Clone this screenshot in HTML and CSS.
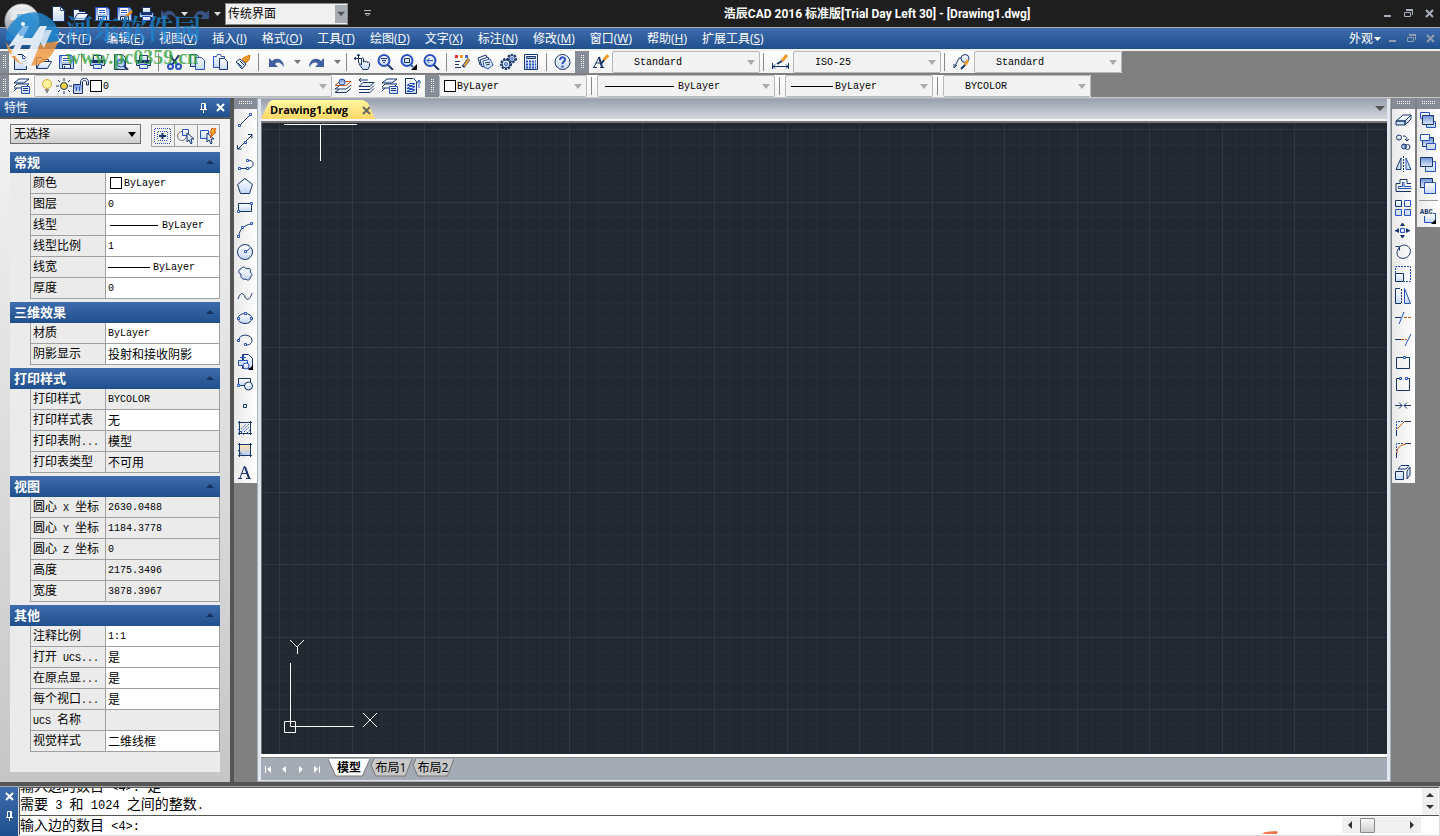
FILE: index.html
```html
<!DOCTYPE html>
<html lang="zh-CN">
<head>
<meta charset="utf-8">
<title>浩辰CAD 2016 标准版</title>
<link rel="stylesheet" href="styles.css">
</head>
<body>
<svg class="sprite" aria-hidden="true">
  <defs>
    <linearGradient id="pale" x1="0" y1="0" x2="0" y2="1"><stop offset="0" stop-color="#fff"/><stop offset="1" stop-color="#c5d8f5"/></linearGradient>
    <linearGradient id="mid" x1="0" y1="0" x2="0" y2="1"><stop offset="0" stop-color="#6f92d4"/><stop offset="1" stop-color="#dfe9fa"/></linearGradient>
    <linearGradient id="sand" x1="0" y1="0" x2="0" y2="1"><stop offset="0" stop-color="#fbe3b4"/><stop offset="1" stop-color="#b9cdf0"/></linearGradient>
    <linearGradient id="knob" x1="0" y1="0" x2="0" y2="1"><stop offset="0" stop-color="#f8f8f8"/><stop offset="1" stop-color="#7b8696"/></linearGradient>
  </defs>
  <symbol id="new" viewBox="0 0 17 16"><path class="n p" d="M2.500 .5h8l4 4v11h-12z"/><path class="b" d="M10.500 .5v4h4"/></symbol>
  <symbol id="open" viewBox="0 0 17 16"><path class="n p" d="M1.500 14.500v-11h5l1 2h6v2"/><path class="n p" d="M1.500 14.500l4-7h11l-4 7z"/></symbol>
  <symbol id="save" viewBox="0 0 17 16"><path class="b m" d="M1.500 1.500h12l2 2v11h-14z"/><path fill="#fff" d="M4 2h8v6H4z"/><path class="b" d="M5 4.500h6M5 6.500h6"/><path class="n p" d="M4.500 10.500h8v4h-8z"/><path class="n" d="M6.500 12v2"/></symbol>
  <symbol id="saveas" viewBox="0 0 17 16"><use href="#save"/><path stroke="#e88a1a" stroke-width="2.500" d="M16 5l-7 7"/><path class="n" d="M9 11l-1 3 3-1"/></symbol>
  <symbol id="print" viewBox="0 0 17 16"><path class="n p" d="M4.500 6V1.500h8V6"/><path class="n m" d="M1.500 6.500h14v5h-14z"/><path fill="#17356b" d="M3 7h11v2H3z"/><path class="b p" d="M4.500 10.500h8v4h-8z"/></symbol>
  <symbol id="preview" viewBox="0 0 17 16"><path class="n p" d="M2.500 .5h8l3 3v12h-11z"/><circle class="b m" cx="9" cy="9" r="4"/><path class="n w" d="M12 12l4 4"/></symbol>
  <symbol id="cut" viewBox="0 0 17 16"><path class="n w" d="M4 1l7 10M13 1L6 11"/><circle class="b w" cx="4.500" cy="12.500" r="2.500"/><circle class="b w" cx="12.500" cy="12.500" r="2.500"/></symbol>
  <symbol id="copy" viewBox="0 0 17 16"><path class="n p" d="M1.500 .5h6l2 2v10h-8z"/><path class="b p" d="M6.500 3.500h6l3 3v9h-9z"/></symbol>
  <symbol id="paste" viewBox="0 0 17 16"><path class="b p" d="M1.500 2.500h3l1-2h3l1 2h3v11h-11z"/><path class="n p" d="M7.500 4.500h5l3 3v8h-8z"/></symbol>
  <symbol id="brush" viewBox="0 0 17 16"><path fill="#f39a25" stroke="#d97a10" d="M10 3l5-2-1 5-3 3-4-4z"/><path class="n p" d="M1 8l4-3 6 5-4 5z"/><path class="n" d="M3 9l4 4M5 7l4 4"/></symbol>
  <symbol id="undo" viewBox="0 0 17 16"><path class="undo" d="M1 4v9h9L7 10c3-3 6-1 9 3 0-7-7-11-12-6z"/></symbol>
  <symbol id="redo" viewBox="0 0 17 16"><path class="undo" d="M16 4v9H7l3-3C7 7 4 9 1 13 1 6 8 2 13 7z"/></symbol>
  <symbol id="caret" viewBox="0 0 9 6"><path fill="currentColor" d="M1 1h7L4.500 5z"/></symbol>
  <symbol id="pan" viewBox="0 0 17 16"><path class="n" d="M0 4.500h9M4.500 0v9M2 3L0 4.500 2 6M3 2l1.500-2L6 2"/><path class="n p" d="M7.500 11V4.500c0-1 2-1 2 0V8c1-1 2-1 2 0 1-1 2-1 2 .5 1-.5 2 0 2 1V12l-1.500 3.500H9L5 10c0-1 1-1 2.500 1z"/></symbol>
  <symbol id="zoomrt" viewBox="0 0 17 16"><circle class="b p w" cx="7" cy="6.500" r="5.500"/><path class="n" d="M4 4.500h6M5 6.500h4M6 8.500h2"/><path class="n w" d="M11 11l5 5"/></symbol>
  <symbol id="zoomwin" viewBox="0 0 17 16"><circle class="b p w" cx="7" cy="6.500" r="5.500"/><path class="n" d="M4.500 4.500h5v4h-5z"/><path class="b w" d="M11 11l2 2"/><path d="M17 10v6h-6z"/></symbol>
  <symbol id="zoomprev" viewBox="0 0 17 16"><circle class="b p w" cx="7" cy="6.500" r="5.500"/><path class="b" d="M4 6.500h6M6.500 4L4 6.500 6.500 9"/><path class="n w" d="M11 11l5 5"/></symbol>
  <symbol id="props" viewBox="0 0 17 16"><path fill="#d33" d="M1 1h3v3H1z"/><path fill="#f39a25" d="M6 1h3v3H6z"/><path fill="#46c" d="M11 1h3v3h-3z"/><path class="n" d="M1 7.500h5M1 10.500h4M1 13.500h6"/><path stroke="#17356b" stroke-width="3" d="M15 5l-6 8"/><path stroke="#f3a335" stroke-width="2" d="M15 5l-5 7"/></symbol>
  <symbol id="sheets" viewBox="0 0 17 16"><path class="n p" d="M1 4l8-3 2 7-8 3z"/><path class="n p" d="M3 6l8-3 2 7-8 3z"/><path class="b p" d="M6 7l7-2 3 6-5 4-4-2z"/><path class="n" d="M8 9l5-1M9 11l4-1"/></symbol>
  <symbol id="gears" viewBox="0 0 17 16"><circle class="n p gear" cx="6" cy="10" r="4.500"/><circle class="n p gear" cx="12" cy="4.500" r="3.500"/><circle class="n p" cx="6" cy="10" r="4"/><circle class="n p" cx="12" cy="4.500" r="3"/><circle class="b" cx="6" cy="10" r="1.500"/><circle class="b" cx="12" cy="4.500" r="1"/></symbol>
  <symbol id="calc" viewBox="0 0 17 16"><path class="n p" d="M1.500 .5h13v15h-13z"/><path class="n m" d="M3.500 2.500h9v2h-9z"/><path stroke="#2852bf" stroke-width="2" stroke-dasharray="2 1" d="M3 7.500h10M3 10.500h10M3 13.500h10"/></symbol>
  <symbol id="help" viewBox="0 0 17 16"><circle class="n p" cx="8.500" cy="8" r="7.500"/><path class="b w" d="M6 6c0-4 6-3 5 0-1 2-2.500 2-2.500 4M8.500 11.500v2"/></symbol>
  <symbol id="tstyle" viewBox="0 0 17 16"><path class="n" d="M2 13L7 3l3 10M4 9h5M1 13.500h4M8 13.500h4"/><path class="n w" d="M7 3l3 10"/><path stroke="#f39a25" stroke-width="3" d="M16 1l-4 5"/><path class="n w" d="M12 6l-3 4"/></symbol>
  <symbol id="dstyle" viewBox="0 0 17 16"><path class="n" d="M.5 9v6M16.500 9v6M1 12.500h15M3 10.500l-2 2 2 2M14 10.500l2 2-2 2"/><path stroke="#f39a25" stroke-width="3" d="M15 1l-5 6"/><path class="n w" d="M10 7l-5 3"/></symbol>
  <symbol id="mstyle" viewBox="0 0 17 16"><circle class="n p" cx="12" cy="4.500" r="4"/><path class="n" d="M8 4H6L2 12M1 10v4l3-3"/><path stroke="#f39a25" stroke-width="3" d="M15 6l-3 5"/><path class="n w" d="M12 11l-4 4"/></symbol>
  <symbol id="layer" viewBox="0 0 17 16"><path class="n p" d="M1 5l5-4h10l-5 4z"/><path class="n" d="M1 9l3-3h12l-4 4H1M1 13l3-3"/><path class="b p" d="M8.500 8.500h8v7h-8z"/><path class="n" d="M10 10.500h5M10 12.500h5"/></symbol>
  <symbol id="layerobj" viewBox="0 0 17 16"><path class="o p" d="M0 7.500l5-4h11l-5 4z"/><path class="n" d="M0 11l4-3M0 11h11l5-4M0 14.500l4-3M0 14.500h11l5-4"/><circle class="b m" cx="7" cy="4" r="3"/></symbol>
  <symbol id="layerprev" viewBox="0 0 17 16"><path class="n p" d="M1 8.500l4-4h11l-4 4z"/><path class="n" d="M1 11.500h11l4-4M1 14.500h11l4-4M1 2h9M3 0L1 2l2 2"/></symbol>
  <symbol id="layerst" viewBox="0 0 17 16"><path class="n p" d="M1.500 .5h8l3 3v12h-11z"/><path class="b" d="M3 7.500l3-2h5l-3 2zM3 10.500l3-2h5l-3 2zM3 13.500l3-2h5l-3 2zM15 10V3M13 5l2-3 2 3"/></symbol>
  <symbol id="bulb" viewBox="0 0 17 16"><circle cx="8" cy="6" r="4.500" fill="#fff29a" stroke="#d0ab35"/><path stroke="#8a8a8a" stroke-width="2" d="M6 12h4M7 14h2"/></symbol>
  <symbol id="sun" viewBox="0 0 17 16"><path class="n" d="M8 0v3M8 13v3M0 8h3M13 8h3M2 2l2 2M12 12l2 2M2 14l2-2M12 4l2-2"/><circle class="n sunny" cx="8" cy="8" r="3.500"/></symbol>
  <symbol id="lock" viewBox="0 0 17 16"><path class="n m" d="M.5 6.500h9v9h-9z"/><path class="n p" d="M7.500 7V4c0-5 8-5 8 0v3h-2V4c0-2-4-2-4 0v3"/><path class="b" d="M3.500 9v4M6.500 9v4"/></symbol>
  <symbol id="line" viewBox="0 0 17 16"><path class="n" d="M2 14L14 2"/><path class="k" d="M1.500 12.500h2v2h-2zM12.500 1.500h2v2h-2z"/></symbol>
  <symbol id="xline" viewBox="0 0 17 16"><path class="n" d="M1 15L15 1M.5 11v4h4M11 .5h4v4"/><path class="k" d="M7.500 7.500h2v2h-2z"/></symbol>
  <symbol id="pline" viewBox="0 0 17 16"><path class="n" d="M3 12.500h7c8 0 8-9 1-8"/><path class="k" d="M1.500 11.500h2v2h-2zM9.500 11.500h2v2h-2zM9.500 3.500h2v2h-2z"/></symbol>
  <symbol id="poly" viewBox="0 0 17 16"><path class="n p" d="M8 .5l7.500 6-3 9h-9l-3-9z"/></symbol>
  <symbol id="rect" viewBox="0 0 17 16"><path class="n p" d="M1.500 3.500h13v8h-13z"/><path class="k" d="M.5 10.500h2v2h-2zM13.500 2.500h2v2h-2z"/></symbol>
  <symbol id="arc" viewBox="0 0 17 16"><path class="n" d="M2 14C2 8 7 3 14 2"/><path class="k" d="M.5 13.500h2v2h-2zM4.500 4.500h2v2h-2zM13.500 .5h2v2h-2z"/></symbol>
  <symbol id="circle" viewBox="0 0 17 16"><circle class="n p" cx="8" cy="8" r="7.500"/><path class="b" d="M9 8l4-4"/><path class="k" d="M7.500 6.500h2v2h-2z"/></symbol>
  <symbol id="cloud" viewBox="0 0 17 16"><path class="n p" d="M4 8C1 8 1 3 4 3c1-3 5-2 5 0 3-2 6 1 4 3 3 2 2 5 0 5 1 3-3 4-4 2-3 1-6-1-5-5z"/></symbol>
  <symbol id="spline" viewBox="0 0 17 16"><path class="n" d="M1 11c3-8 5-6 7-2s5 3 7-4"/></symbol>
  <symbol id="ellipse" viewBox="0 0 17 16"><ellipse class="n p" cx="8" cy="8.500" rx="7" ry="5"/><path class="k" d="M.5 7.500h2v2h-2zM13.500 7.500h2v2h-2zM7.500 2.500h2v2h-2z"/></symbol>
  <symbol id="earc" viewBox="0 0 17 16"><path class="n" d="M2 8c0-7 13-6 13 0 0 4-3 5-6 5"/><path class="k" d="M.5 7.500h2v2h-2zM7.500 11.500h2v2h-2z"/></symbol>
  <symbol id="insert" viewBox="0 0 17 16"><path class="n p" d="M5.500 .5h6l4 4v10h-10z"/><path class="b p" d="M1.500 6.500h9v5h-9zM3 3.500h6M6.500 1v5"/><circle class="b p" cx="9" cy="12" r="3"/><path d="M16 11v5h-5z"/></symbol>
  <symbol id="block" viewBox="0 0 17 16"><path class="n p" d="M1.500 2.500h12v7h-12z"/><circle class="n p" cx="11.500" cy="10" r="4"/><path class="k" d="M.5 8.500h2v2h-2z"/></symbol>
  <symbol id="point" viewBox="0 0 17 16"><path class="n" d="M6.500 6.500h3v3h-3z"/></symbol>
  <symbol id="hatch" viewBox="0 0 17 16"><path class="n p" d="M2.500 1v14M13.500 1v14M1 2.500h14M1 13.500h14"/><path class="b" stroke-dasharray="2 1" d="M4 9l5-5M4 12l8-8M7 12l5-5M10 13l3-3"/><path class="b" d="M1 9l6 6"/></symbol>
  <symbol id="grad" viewBox="0 0 17 16"><path fill="url(#sand)" d="M3 3h10v10H3z"/><path class="n" d="M2.500 1v14M13.500 1v14M1 2.500h14M1 13.500h14"/><path class="n" stroke-dasharray="2 1" d="M1 8l6 7"/></symbol>
  <symbol id="mtext" viewBox="0 0 17 16"><path class="n" d="M3 14L7.500 2 12 14M4 9.500h6M1 14.500h4M9 14.500h5"/><path class="n w" d="M8 3l4 11"/></symbol>
  <symbol id="erase" viewBox="0 0 17 16"><path class="n p" d="M1 9l7-6h8l-6 6zM1 9h9v4H1zM10 9l6-6v4l-6 6z"/></symbol>
  <symbol id="copyobj" viewBox="0 0 17 16"><circle class="n p" cx="4" cy="3.500" r="2.500"/><circle class="n m" cx="9" cy="12.500" r="2.500"/><circle class="n" cx="12.500" cy="13" r="2.500"/><path class="n" d="M8 2c3 0 4 1 4 5M10 5l2 2 2-2"/></symbol>
  <symbol id="mirror" viewBox="0 0 17 16"><path class="n p" d="M1 13.500h5V2z"/><path class="b p" d="M16 13.500h-5V2z"/><path class="n" stroke-dasharray="2 1" d="M8.500 0v16"/></symbol>
  <symbol id="offset" viewBox="0 0 17 16"><path class="n" d="M16 5.500h-4v-4h-7v4h-4v8h15"/><path class="b" d="M16 8.500h-7v-4H7.500v4h-4v2h13"/></symbol>
  <symbol id="array" viewBox="0 0 17 16"><path class="n p" d="M.5 .5h6v6h-6z"/><path class="b p" d="M9.500 .5h6v6h-6zM.5 9.500h6v6h-6zM9.500 9.500h6v6h-6z"/></symbol>
  <symbol id="move" viewBox="0 0 17 16"><path class="b p" d="M5.500 6.500h4v4h-4z"/><path fill="#17356b" d="M7 1h1l2 3H5zM7 16h1l2-3H5zM0 8h1l3-2v5L0 9zM15 8h-1l-3-2v5l4-2z"/></symbol>
  <symbol id="rotate" viewBox="0 0 17 16"><path class="n" d="M5 2.500c6-4 12 1 10 7s-12 7-13 0c0-3 1-4 2-6M.5 2.500h4v4"/></symbol>
  <symbol id="scale" viewBox="0 0 17 16"><path class="b" stroke-dasharray="2 1" d="M.5 7V.5h15v15H9"/><path class="n p" d="M.5 7.500h8v8h-8z"/></symbol>
  <symbol id="stretch" viewBox="0 0 17 16"><path class="n p" d="M5 .5H.5v15H6"/><path class="n" stroke-dasharray="2 1" d="M6.500 1v14"/><path class="b p" d="M9.500 .5l6 15h-6z"/></symbol>
  <symbol id="trim" viewBox="0 0 17 16"><path class="n" d="M0 7.500h6"/><path class="b" d="M4 14l5-12"/><path class="o" stroke-dasharray="3 1" d="M9 7.500h8"/></symbol>
  <symbol id="extend" viewBox="0 0 17 16"><path class="n" d="M0 7.500h6"/><path class="o" stroke-dasharray="3 1" d="M6 7.500h6"/><path class="b" d="M10 14l6-12"/></symbol>
  <symbol id="breakpt" viewBox="0 0 17 16"><path class="n" d="M1.500 3.500h13v11h-13z"/><path class="k" d="M8.500 2.500h2v2h-2z"/></symbol>
  <symbol id="break" viewBox="0 0 17 16"><path class="n" d="M4 2.500H1.500v12h13v-12H12"/><path class="k" d="M4.500 1.500h2v2h-2zM10.500 1.500h2v2h-2z"/></symbol>
  <symbol id="join" viewBox="0 0 17 16"><path class="n" d="M0 7.500h7M4 4.500l3 3-3 3M16 7.500H9M12 4.500l-3 3 3 3"/></symbol>
  <symbol id="chamfer" viewBox="0 0 17 16"><path class="n" d="M10 1.500h6M1.500 16v-6"/><path class="b" stroke-dasharray="2 1" d="M1.500 9V1.500H9"/><path class="o" d="M2 9l8-8"/></symbol>
  <symbol id="fillet" viewBox="0 0 17 16"><path class="n" d="M10 1.500h6M1.500 16v-6"/><path class="b" stroke-dasharray="2 1" d="M1.500 9V1.500H9"/><path class="o" d="M2 11c0-5 3-8 9-9"/></symbol>
  <symbol id="explode" viewBox="0 0 17 16"><path class="n p" d="M.5 7.500h8v8h-8zM3 5l3-3.500h8L11 5zM12 7l3-4v8l-3 4z"/></symbol>
  <symbol id="ord1" viewBox="0 0 17 16"><path class="b p" d="M.5 .5h9v6h-9zM6.500 9.500h9v6h-9z"/><path class="n m" d="M2.500 3.500h11v9h-11z"/></symbol>
  <symbol id="ord2" viewBox="0 0 17 16"><path class="n m" d="M2.500 3.500h11v9h-11z"/><path class="b p" d="M.5 .5h9v6h-9zM6.500 9.500h9v6h-9z"/></symbol>
  <symbol id="ord3" viewBox="0 0 17 16"><path class="b p" d="M5.500 5.500h10v10h-10z"/><path class="n m" d="M.5 1.500h12v9H.5z"/></symbol>
  <symbol id="ord4" viewBox="0 0 17 16"><path class="n m" d="M.5 .5h12v9H.5z"/><path class="b p" d="M4.500 4.500h11v11h-11z"/></symbol>
  <symbol id="ord5" viewBox="0 0 17 16"><path class="b p" d="M4.500 8v6.500h11V5.500H13"/><path d="M16 11v5h-5z"/></symbol>
  <symbol id="grip" viewBox="0 0 17 16"><path class="b" d="M1 .5h15M1 15.500h15M.5 1v14M16.500 1v14M4 3.500h9M4 12.500h9M3.500 4v8M13.500 4v8" stroke-dasharray="1 1"/><path class="n w" d="M5 8h7M8.500 5v6"/></symbol>
  <symbol id="pick" viewBox="0 0 17 16"><circle cx="5" cy="8" r="4.500" class="g"/><path class="b p" d="M5.500 1.500h6v6h-6z"/><path class="n p" d="M10 5v9l2-2 2 4 1-1-1-4h3z"/></symbol>
  <symbol id="quick" viewBox="0 0 17 16"><path class="b p" d="M.5 2.500h8v8h-8z"/><path class="n p" d="M7 5v9l2-2 2 4 1-1-1-4h3z"/><path fill="#ffb22e" stroke="#d9540a" d="M12 0h4l-2 4h2l-6 6 2-5h-2z"/></symbol>
  <symbol id="min" viewBox="0 0 11 11"><path class="c" stroke-width="2" d="M2 8h7"/></symbol>
  <symbol id="restore" viewBox="0 0 11 11"><path class="c" stroke-width="2" d="M3 2h7"/><path class="c" d="M9.500 2v5M1.500 4.500h6v4h-6z"/></symbol>
  <symbol id="close" viewBox="0 0 11 11"><path class="c" stroke-width="2" d="M2 2l7 7M9 2L2 9"/></symbol>
  <symbol id="pin" viewBox="0 0 11 11"><path class="c" stroke-width="1" d="M3.500 7V1.500h4V7M2 7.500h7M5.500 8v3M6.500 2v5"/></symbol>
  <pattern id="grid" x="17" y="6" width="145" height="145" patternUnits="userSpaceOnUse">
    <path class="minor" d="M15.500 0v145M29.500 0v145M44.500 0v145M58.500 0v145M87.500 0v145M102.500 0v145M116.500 0v145M131.500 0v145M0 15.500h145M0 29.500h145M0 44.500h145M0 58.500h145M0 87.500h145M0 102.500h145M0 116.500h145M0 131.500h145"/>
    <path class="major" d="M.5 0v145M73.500 0v145M0 .5h145M0 73.500h145"/>
  </pattern>
</svg>

<header class="titlebar">
  <div class="quick">
    <button aria-label="新建"><svg><use href="#new"/></svg></button>
    <button aria-label="打开"><svg><use href="#open"/></svg></button>
    <button aria-label="保存"><svg><use href="#save"/></svg></button>
    <button aria-label="另存为"><svg><use href="#saveas"/></svg></button>
    <button aria-label="打印"><svg><use href="#print"/></svg></button>
    <button aria-label="放弃" class="dim"><svg><use href="#undo"/></svg></button>
    <button aria-label="放弃列表" class="arrow"><svg><use href="#caret"/></svg></button>
    <button aria-label="重做" class="dim"><svg><use href="#redo"/></svg></button>
    <button aria-label="重做列表" class="arrow"><svg><use href="#caret"/></svg></button>
  </div>
  <div class="workspace"><select aria-label="工作空间"><option>传统界面</option></select><svg><use href="#caret"/></svg></div>
  <button class="more" aria-label="自定义"><svg viewBox="0 0 9 9"><path stroke="#bbb" fill="none" d="M1 1.500h7M2 4.500h5L4.500 7z"/></svg></button>
  <h1>浩辰CAD 2016 标准版[Trial Day Left 30] - [Drawing1.dwg]</h1>
  <div class="winctl">
    <button aria-label="最小化"><svg><use href="#min"/></svg></button>
    <button aria-label="还原"><svg><use href="#restore"/></svg></button>
    <button aria-label="关闭"><svg><use href="#close"/></svg></button>
  </div>
</header>

<nav class="menubar">
  <button>文件(<u>F</u>)</button><button>编辑(<u>E</u>)</button><button>视图(<u>V</u>)</button><button>插入(<u>I</u>)</button><button>格式(<u>O</u>)</button><button>工具(<u>T</u>)</button><button>绘图(<u>D</u>)</button><button>文字(<u>X</u>)</button><button>标注(<u>N</u>)</button><button>修改(<u>M</u>)</button><button>窗口(<u>W</u>)</button><button>帮助(<u>H</u>)</button><button>扩展工具(<u>S</u>)</button>
  <button class="look">外观<svg class="car"><use href="#caret"/></svg></button>
  <div class="winctl sub">
    <button aria-label="最小化文档"><svg><use href="#min"/></svg></button>
    <button aria-label="还原文档"><svg><use href="#restore"/></svg></button>
    <button aria-label="关闭文档"><svg><use href="#close"/></svg></button>
  </div>
</nav>

<div class="bars">
  <div class="bar">
    <i class="handle"></i>
    <button aria-label="新建"><svg><use href="#new"/></svg></button>
    <button aria-label="打开"><svg><use href="#open"/></svg></button>
    <button aria-label="保存"><svg><use href="#save"/></svg></button>
    <i class="sep"></i>
    <button aria-label="打印"><svg><use href="#print"/></svg></button>
    <button aria-label="打印预览"><svg><use href="#preview"/></svg></button>
    <button aria-label="发布"><svg><use href="#print"/></svg></button>
    <i class="sep"></i>
    <button aria-label="剪切"><svg><use href="#cut"/></svg></button>
    <button aria-label="复制"><svg><use href="#copy"/></svg></button>
    <button aria-label="粘贴"><svg><use href="#paste"/></svg></button>
    <button aria-label="特性匹配"><svg><use href="#brush"/></svg></button>
    <i class="sep"></i>
    <button aria-label="放弃" class="wide"><svg><use href="#undo"/></svg></button>
    <button aria-label="放弃列表" class="arrow"><svg><use href="#caret"/></svg></button>
    <button aria-label="重做" class="wide"><svg><use href="#redo"/></svg></button>
    <button aria-label="重做列表" class="arrow"><svg><use href="#caret"/></svg></button>
    <i class="sep"></i>
    <button aria-label="平移"><svg><use href="#pan"/></svg></button>
    <button aria-label="实时缩放"><svg><use href="#zoomrt"/></svg></button>
    <button aria-label="窗口缩放"><svg><use href="#zoomwin"/></svg></button>
    <button aria-label="缩放上一个"><svg><use href="#zoomprev"/></svg></button>
    <i class="sep"></i>
    <button aria-label="特性"><svg><use href="#props"/></svg></button>
    <button aria-label="图纸集"><svg><use href="#sheets"/></svg></button>
    <button aria-label="选项"><svg><use href="#gears"/></svg></button>
    <button aria-label="计算器"><svg><use href="#calc"/></svg></button>
    <i class="sep"></i>
    <button aria-label="帮助"><svg><use href="#help"/></svg></button>
    <i class="handle inner"></i>
    <button aria-label="文字样式"><svg><use href="#tstyle"/></svg></button>
    <div class="combo"><select class="in" aria-label="文字样式"><option>Standard</option></select></div>
    <i class="sep"></i>
    <button aria-label="标注样式" class="mid"><svg><use href="#dstyle"/></svg></button>
    <div class="combo"><select class="in" aria-label="标注样式"><option>ISO-25</option></select></div>
    <i class="sep"></i>
    <button aria-label="引线样式" class="mid"><svg><use href="#mstyle"/></svg></button>
    <div class="combo"><select class="in" aria-label="引线样式"><option>Standard</option></select></div>
  </div>
  <div class="bar">
    <i class="handle"></i>
    <button aria-label="图层" class="mid"><svg><use href="#layer"/></svg></button>
    <div class="combo layers"><svg class="st"><use href="#bulb"/></svg><svg class="st"><use href="#sun"/></svg><svg class="st"><use href="#lock"/></svg><b class="swatch"></b><select aria-label="图层"><option>0</option></select></div>
    <button aria-label="置为当前层"><svg><use href="#layerobj"/></svg></button>
    <button aria-label="上一个图层"><svg><use href="#layerprev"/></svg></button>
    <button aria-label="图层管理"><svg><use href="#layer"/></svg></button>
    <button aria-label="图层状态"><svg><use href="#layerst"/></svg></button>
    <i class="handle inner"></i>
    <div class="combo"><b class="swatch"></b><select aria-label="颜色"><option>ByLayer</option></select></div>
    <i class="sep big"></i>
    <div class="combo ltype"><b class="rule"></b><select aria-label="线型"><option>ByLayer</option></select></div>
    <i class="sep big"></i>
    <div class="combo"><b class="rule short"></b><select aria-label="线宽"><option>ByLayer</option></select></div>
    <i class="sep big"></i>
    <div class="combo"><select class="in" aria-label="打印样式"><option>BYCOLOR</option></select></div>
  </div>
</div>

<main class="work">
  <aside class="props">
    <h2><span>特性</span><button aria-label="固定"><svg><use href="#pin"/></svg></button><button aria-label="关闭特性"><svg><use href="#close"/></svg></button></h2>
    <div class="choose">
      <div class="pickbox"><select aria-label="选择对象"><option>无选择</option></select></div>
      <div class="trio">
        <button aria-label="切换"><svg><use href="#grip"/></svg></button>
        <button aria-label="选择"><svg><use href="#pick"/></svg></button>
        <button aria-label="快速选择"><svg><use href="#quick"/></svg></button>
      </div>
    </div>
    <div class="sheet">
      <section><h3><button>常规</button></h3>
        <table>
          <tr><th>颜色</th><td class="m"><b class="swatch"></b>ByLayer</td></tr>
          <tr><th>图层</th><td class="m">0</td></tr>
          <tr><th>线型</th><td class="m"><b class="rule t1"></b>ByLayer</td></tr>
          <tr><th>线型比例</th><td class="m">1</td></tr>
          <tr><th>线宽</th><td class="m"><b class="rule t2"></b>ByLayer</td></tr>
          <tr><th>厚度</th><td class="m">0</td></tr>
        </table></section>
      <section><h3><button>三维效果</button></h3>
        <table>
          <tr><th>材质</th><td class="m">ByLayer</td></tr>
          <tr><th>阴影显示</th><td>投射和接收阴影</td></tr>
        </table></section>
      <section><h3><button>打印样式</button></h3>
        <table>
          <tr><th>打印样式</th><td class="m ro">BYCOLOR</td></tr>
          <tr><th>打印样式表</th><td>无</td></tr>
          <tr><th>打印表附<span>...</span></th><td class="ro">模型</td></tr>
          <tr><th>打印表类型</th><td class="ro">不可用</td></tr>
        </table></section>
      <section><h3><button>视图</button></h3>
        <table>
          <tr><th>圆心<span> X </span>坐标</th><td class="m ro">2630.0488</td></tr>
          <tr><th>圆心<span> Y </span>坐标</th><td class="m ro">1184.3778</td></tr>
          <tr><th>圆心<span> Z </span>坐标</th><td class="m ro">0</td></tr>
          <tr><th>高度</th><td class="m ro">2175.3496</td></tr>
          <tr><th>宽度</th><td class="m ro">3878.3967</td></tr>
        </table></section>
      <section><h3><button>其他</button></h3>
        <table>
          <tr><th>注释比例</th><td class="m">1:1</td></tr>
          <tr><th>打开<span> UCS...</span></th><td>是</td></tr>
          <tr><th>在原点显<span>...</span></th><td>是</td></tr>
          <tr><th>每个视口<span>...</span></th><td>是</td></tr>
          <tr><th><span>UCS </span>名称</th><td class="ro"></td></tr>
          <tr><th>视觉样式</th><td>二维线框</td></tr>
        </table></section>
    </div>
  </aside>

  <div class="rail">
    <div class="vbar">
      <i class="vhandle"></i>
      <button aria-label="直线"><svg><use href="#line"/></svg></button>
      <button aria-label="构造线"><svg><use href="#xline"/></svg></button>
      <button aria-label="多段线"><svg><use href="#pline"/></svg></button>
      <button aria-label="正多边形"><svg><use href="#poly"/></svg></button>
      <button aria-label="矩形"><svg><use href="#rect"/></svg></button>
      <button aria-label="圆弧"><svg><use href="#arc"/></svg></button>
      <button aria-label="圆"><svg><use href="#circle"/></svg></button>
      <button aria-label="修订云线"><svg><use href="#cloud"/></svg></button>
      <button aria-label="样条曲线"><svg><use href="#spline"/></svg></button>
      <button aria-label="椭圆"><svg><use href="#ellipse"/></svg></button>
      <button aria-label="椭圆弧"><svg><use href="#earc"/></svg></button>
      <button aria-label="插入块"><svg><use href="#insert"/></svg></button>
      <button aria-label="创建块"><svg><use href="#block"/></svg></button>
      <button aria-label="点"><svg><use href="#point"/></svg></button>
      <button aria-label="图案填充"><svg><use href="#hatch"/></svg></button>
      <button aria-label="渐变色"><svg><use href="#grad"/></svg></button>
      <button aria-label="多行文字"><svg><use href="#mtext"/></svg></button>
    </div>
  </div>

  <section class="doc">
    <div class="tabs">
      <div class="tab"><span>Drawing1.dwg</span><button aria-label="关闭图纸"><svg><use href="#close"/></svg></button></div>
      <button class="list" aria-label="图纸列表"><svg viewBox="0 0 10 6"><path fill="#555" d="M0 0h10L5 5z"/></svg></button>
    </div>
    <div class="canvas">
      <svg class="field" width="100%" height="100%"><rect width="100%" height="100%" fill="url(#grid)"/><path class="wh" d="M22 1.500h73M58.500 1v37"/></svg>
      <svg class="ucs" width="96" height="96" viewBox="0 0 96 96"><path class="wh" d="M8.500 24v63.500H72M2.500 82.500h11v11h-11z"/><path class="wh" d="M8 1l7 7 7-7M15.500 8v7M81 74l14 14M95 74L81 88"/></svg>
    </div>
    <div class="layouts">
      <button class="go" aria-label="首个"><svg viewBox="0 0 9 9"><path fill="#fff" d="M1 1h1v7H1zM7 1v7L3 4z"/></svg></button>
      <button class="go" aria-label="上一个"><svg viewBox="0 0 9 9"><path fill="#fff" d="M6 1v7L2 4z"/></svg></button>
      <button class="go" aria-label="下一个"><svg viewBox="0 0 9 9"><path fill="#fff" d="M3 1v7l4-4z"/></svg></button>
      <button class="go" aria-label="末个"><svg viewBox="0 0 9 9"><path fill="#fff" d="M2 1v7l4-4zM7 1h1v7H7z"/></svg></button>
      <button class="lay on"><svg viewBox="0 0 44 17" preserveAspectRatio="none"><path d="M0 0l8 16h28l8-16"/></svg><span>模型</span></button>
      <button class="lay"><svg viewBox="0 0 44 17" preserveAspectRatio="none"><path d="M4 0l-3 6 5 10h31l7-16"/></svg><span>布局1</span></button>
      <button class="lay"><svg viewBox="0 0 44 17" preserveAspectRatio="none"><path d="M4 0l-3 6 5 10h31l7-16"/></svg><span>布局2</span></button>
    </div>
  </section>

  <div class="rail right">
    <div class="vbar">
      <i class="vhandle"></i>
      <button aria-label="删除"><svg><use href="#erase"/></svg></button>
      <button aria-label="复制"><svg><use href="#copyobj"/></svg></button>
      <button aria-label="镜像"><svg><use href="#mirror"/></svg></button>
      <button aria-label="偏移"><svg><use href="#offset"/></svg></button>
      <button aria-label="阵列"><svg><use href="#array"/></svg></button>
      <button aria-label="移动"><svg><use href="#move"/></svg></button>
      <button aria-label="旋转"><svg><use href="#rotate"/></svg></button>
      <button aria-label="缩放"><svg><use href="#scale"/></svg></button>
      <button aria-label="拉伸"><svg><use href="#stretch"/></svg></button>
      <button aria-label="修剪"><svg><use href="#trim"/></svg></button>
      <button aria-label="延伸"><svg><use href="#extend"/></svg></button>
      <button aria-label="打断于点"><svg><use href="#breakpt"/></svg></button>
      <button aria-label="打断"><svg><use href="#break"/></svg></button>
      <button aria-label="合并"><svg><use href="#join"/></svg></button>
      <button aria-label="倒角"><svg><use href="#chamfer"/></svg></button>
      <button aria-label="圆角"><svg><use href="#fillet"/></svg></button>
      <button aria-label="分解"><svg><use href="#explode"/></svg></button>
    </div>
    <div class="vbar">
      <i class="vhandle"></i>
      <button aria-label="前置"><svg><use href="#ord1"/></svg></button>
      <button aria-label="后置"><svg><use href="#ord2"/></svg></button>
      <button aria-label="置于对象之上"><svg><use href="#ord3"/></svg></button>
      <button aria-label="置于对象之下"><svg><use href="#ord4"/></svg></button>
      <i class="vsep"></i>
      <button class="abc" aria-label="文字前置"><svg><use href="#ord5"/></svg><span>ABC</span></button>
    </div>
  </div>
</main>

<footer class="command">
  <div class="strip"><button aria-label="关闭命令行"><svg><use href="#close"/></svg></button><button aria-label="固定命令行"><svg><use href="#pin"/></svg></button></div>
  <div class="console">
    <div class="history">
      <div class="log"><p>输入边的数目<span> &lt;4&gt;: </span>是</p><p>需要<span> 3 </span>和<span> 1024 </span>之间的整数<span>.</span></p></div>
      <div class="vscroll"><button aria-label="上"><svg viewBox="0 0 8 5"><path d="M4 0l4 4H0z"/></svg></button><button aria-label="下"><svg viewBox="0 0 8 5"><path d="M0 0h8L4 4z"/></svg></button></div>
    </div>
    <div class="prompt">
      <label for="cmd">输入边的数目<span> &lt;4&gt;:</span></label><input id="cmd" type="text">
      <svg class="mark" viewBox="0 0 16 3"><path fill="#f4794a" d="M0 3l3-2 11-1 2 1-1 2z"/></svg>
      <div class="hscroll"><button aria-label="左"><svg viewBox="0 0 5 8"><path d="M0 4l4-4v8z"/></svg></button><i></i><button aria-label="右"><svg viewBox="0 0 5 8"><path d="M0 0l4 4-4 4z"/></svg></button></div>
    </div>
  </div>
</footer>

<div class="brand">
  <svg viewBox="0 0 62 70" width="62" height="70">
    <circle cx="22" cy="21" r="17" fill="url(#knob)" stroke="#aaa"/>
    <path fill="#eee" opacity=".8" d="M12 11h19l6 5-1 4H10z"/>
    <g opacity=".82"><path fill="#1f86cf" d="M6 40C4 17 40-2 57 27c2 5 2 10 1 14l-15 3-13 2z"/><path fill="#ef963d" d="M6 42c4 31 43 33 52-1l-18 3-10 22-10-3z"/></g>
    <path fill="#eef3f8" opacity=".92" d="M8 47l15-21h6l-6 12h9l8-12h7L31 66h-9l9-21h-9l-5 11h-7l5-11z"/>
    <path fill="#dfe9f2" opacity=".85" d="M39 40l7-10h6l-8 18z"/>
    <path fill="#2c8fd6" opacity=".55" d="M17 14h15l4 5-3 13-5 4H20l-4-6z"/>
    <circle cx="23" cy="24" r="2" fill="#fff"/>
  </svg>
  <div><strong>河东软件园</strong><em>www.pc0359.cn</em></div>
</div>
</body>
</html>
```

FILE: styles.css
```css
* { box-sizing: border-box; }

body {
  margin: 0;
  height: 100vh;
  display: flex;
  flex-direction: column;
  overflow: hidden;
  background: #808080;
  color: #000;
  font: 12px/16px "Open Sans", "Noto Sans CJK SC", sans-serif;
}

button, select, input {
  margin: 0;
  padding: 0;
  border: 0;
  background: none;
  color: inherit;
  font: inherit;
  border-radius: 0;
}

select { appearance: none; outline: 0; }
h1, h2, h3, p { margin: 0; font-size: inherit; }
svg { display: block; }
i, b, em { font-style: normal; }

.sprite { position: absolute; width: 0; height: 0; }

/* icon strokes and fills */
.n { stroke: #17356b; fill: none; }
.b { stroke: #2852bf; fill: none; }
.o { stroke: #c75a12; fill: none; }
.g { stroke: #777; fill: none; }
.k { stroke: #2852bf; fill: #fff; }
.c { stroke: currentColor; fill: none; }
.w { stroke-width: 2; }
.p { fill: url(#pale); }
.m { fill: url(#mid); }
.gear { stroke-width: 3; stroke-dasharray: 2 1; }
.sunny { fill: #fbd13c; }
.undo { fill: #3f5f9e; }
.wh { stroke: #fff; fill: none; }
.minor { stroke: #252d37; }
.major { stroke: #2e364a; }

/* title bar */
.titlebar {
  flex: none;
  display: flex;
  align-items: center;
  height: 27px;
  background: #1e1e1e;
  color: #fff;
}
.quick { display: flex; align-items: center; padding-left: 47px; width: 225px; }
.quick button { flex: none; width: 22px; padding-left: 3px; }
.quick svg { width: 17px; height: 16px; }
.quick .dim { opacity: .8; width: 23px; }
.quick .arrow { width: 10px; padding: 0; color: #ddd; }
.quick .arrow svg { width: 9px; height: 6px; }
.workspace {
  display: flex;
  align-items: center;
  width: 123px;
  height: 22px;
  border: 1px solid #888;
  background: #f0f0f0;
  color: #000;
}
.workspace select { flex: 1; height: 18px; padding-left: 2px; line-height: 18px; }
.workspace svg { width: 12px; height: 18px; padding: 0 1px; background: #a8adb5; color: #555; }
.more { margin-left: 15px; width: 9px; }
.more svg { width: 9px; height: 9px; }
h1 { flex: 1; text-align: center; font: 700 12px/16px Roboto, "Noto Sans CJK SC", sans-serif; white-space: nowrap; }
.winctl { display: flex; gap: 10px; padding-right: 5px; color: #a9b0bd; }
.winctl svg { width: 11px; height: 11px; }

/* menu bar */
.menubar {
  flex: none;
  display: flex;
  align-items: center;
  height: 24px;
  padding-left: 54px;
  border-top: 1px solid #aaa;
  border-bottom: 2px solid #f0f0f0;
  background: linear-gradient(#3f6cad, #1f4f8c);
  color: #fff;
}
.menubar > button { margin-right: 15px; white-space: nowrap; }
.menubar u { text-underline-offset: 1px; }
.menubar .look { margin-left: auto; margin-right: 5px; display: flex; align-items: center; }
.car { width: 9px; height: 6px; }
.sub { color: #8f9cb0; gap: 8px; padding-right: 4px; }

/* toolbars */
.bars { flex: none; border-bottom: 1px solid #c8c8c8; }
.bar {
  display: flex;
  align-items: center;
  width: max-content;
  height: 22px;
  margin-bottom: 2px;
  background: linear-gradient(#fff, #f2f2f2);
}
.bar + .bar { margin-bottom: 0; }
.bar button { flex: none; width: 23px; padding-left: 3px; }
.bar button svg { width: 17px; height: 16px; }
.bar .wide { width: 28px; padding-left: 5px; }
.bar .mid { width: 25px; padding-left: 4px; }
.bar .arrow { width: 12px; padding-left: 2px; color: #777; }
.bar .arrow svg { width: 9px; height: 6px; }
.handle {
  flex: none;
  width: 9px;
  height: 22px;
  border: solid #858c98;
  border-width: 4px 3px 4px 2px;
  background: conic-gradient(#fff 25%, #858c98 0) 0 0 / 2px 2px;
}
.handle.inner { width: 14px; margin-left: 1px; border-width: 4px 5px; }
.sep { flex: none; width: 8px; height: 18px; background: linear-gradient(#888, #888) 3px 0 / 1px 100% no-repeat; }
.sep.big { width: 10px; background-position-x: 4px; }
.combo {
  flex: none;
  display: flex;
  align-items: center;
  width: 148px;
  height: 22px;
  padding: 0 4px;
  border: 1px solid #b5b9be;
  border-radius: 2px;
  background: #f3f3f3;
}
.combo::after { content: ""; flex: none; border: 4px solid transparent; border-top: 5px solid #aaa; border-bottom: 0; }
.combo select { flex: 1; min-width: 0; height: 20px; padding: 2px 0 0 1px; font: 10px/18px "Liberation Mono", monospace; }
.combo .in { padding-left: 17px; }
.layers { width: 298px; }
.ltype { width: 178px; }
.st { flex: none; width: 17px; height: 16px; }
.swatch { flex: none; display: inline-block; width: 12px; height: 12px; border: 1px solid #000; background: #fff; }
.rule { flex: none; width: 69px; height: 1px; margin: 0 3px; background: #000; }
.rule.short { width: 42px; margin: 0 1px; }

/* work area */
.work { flex: 1; display: flex; min-height: 0; border-bottom: 4px solid #555; }

.props {
  flex: none;
  display: flex;
  flex-direction: column;
  width: 234px;
  border-right: 4px solid #555;
  background: linear-gradient(#f4f4f4, #c6c6c6);
}
.props h2 {
  flex: none;
  display: flex;
  align-items: center;
  height: 21px;
  padding: 0 4px;
  border-bottom: 2px solid #555;
  background: linear-gradient(#3f6cad, #1f4f8c);
  color: #fff;
  font-weight: 400;
}
.props h2 span { flex: 1; }
.props h2 button { margin-left: 6px; }
.props h2 svg { width: 11px; height: 11px; }
.choose { display: flex; justify-content: space-between; padding: 5px 10px; }
.pickbox {
  display: flex;
  align-items: center;
  width: 131px;
  height: 20px;
  padding: 0 4px 0 3px;
  border: 1px solid #707070;
  background: linear-gradient(#f2f2f2, #cfcfcf);
}
.pickbox select { flex: 1; line-height: 18px; }
.pickbox::after { content: ""; border: 4px solid transparent; border-top: 5px solid #000; border-bottom: 0; }
.trio { display: flex; border: 1px solid #a0a0a0; }
.trio button { width: 23px; height: 21px; padding-left: 2px; border-right: 1px solid #a0a0a0; }
.trio button:last-child { border: 0; width: 21px; }
.trio svg { width: 17px; height: 16px; }
.sheet { flex: 1; margin: 0 10px 10px; background: #ebebeb; }
.sheet section { margin-bottom: 3px; }
h3 { height: 21px; background: linear-gradient(#3f6cad, #1f4f8c); }
h3 button {
  display: flex;
  align-items: center;
  justify-content: space-between;
  width: 100%;
  height: 20px;
  padding: 0 6px 0 4px;
  color: #fff;
  font-size: 13px;
  font-weight: 700;
}
h3 button::after { content: ""; border: 4px solid transparent; border-bottom: 4px solid #14305e; border-top: 0; }
.sheet table { width: 190px; margin-left: 20px; table-layout: fixed; border-spacing: 0; }
.sheet tr { height: 21px; }
.sheet th, .sheet td {
  height: 21px;
  padding: 0 2px;
  border: solid #a0a0a0;
  border-width: 0 1px 1px 0;
  text-align: left;
  font-weight: 400;
  line-height: 18px;
  white-space: nowrap;
}
.sheet th { width: 76px; border-left-width: 1px; }
.sheet td { padding-top: 2px; background: #fff; }
.sheet td.ro { background: #ebebeb; }
.sheet th span { white-space: pre; font: 10px/12px "Liberation Mono", monospace; }
.sheet td.m { font: 10px/18px "Liberation Mono", monospace; }
.sheet .swatch { margin: 0 2px; vertical-align: middle; }
.sheet .rule { display: inline-block; vertical-align: middle; width: 48px; margin: 0 4px 0 2px; }
.sheet .t2 { width: 42px; margin: 0 3px 0 0; }

.rail { flex: none; width: 23px; }
.rail.right { display: flex; align-items: flex-start; gap: 2px; width: auto; }
.vbar { width: 23px; background: linear-gradient(90deg, #e9e9e9, #fff); }
.vhandle {
  display: block;
  height: 11px;
  border: solid #858c98;
  border-width: 3px 4px 4px;
  background: conic-gradient(#fff 25%, #858c98 0) 0 0 / 2px 2px;
}
.vbar button { display: block; position: relative; width: 23px; height: 22px; padding: 0 3px; }
.vbar svg { width: 17px; height: 16px; }
.vsep { display: block; height: 8px; margin: 0 2px; background: linear-gradient(#999, #999) 0 3px / 100% 1px no-repeat; }
.abc span { position: absolute; left: 3px; top: 4px; color: #17356b; font: bold 7px/7px "Liberation Mono", monospace; }

.doc {
  flex: 1;
  min-width: 0;
  display: flex;
  flex-direction: column;
  border: solid #e1e7f0;
  border-width: 0 4px 2px;
  outline: 1px solid #aab0b8;
  outline-offset: -1px;
  margin-right: 1px;
}
.tabs {
  flex: none;
  display: flex;
  align-items: flex-end;
  justify-content: space-between;
  height: 23px;
  border-bottom: 2px solid #f4f4f4;
  background: linear-gradient(#959dab, #d6d8dc);
}
.tab {
  display: flex;
  align-items: center;
  width: 114px;
  height: 19px;
  padding-left: 9px;
  clip-path: polygon(0 100%, 8px 2px, 11px 0, 102px 0, 107px 3px, 100% 100%);
  background: linear-gradient(#fff8a0, #ffd766);
  font-size: 11px;
  font-weight: 700;
}
.tab span { flex: 1; }
.tab button { margin: 2px 3px 0 0; color: #666; }
.tab svg { width: 11px; height: 11px; }
.list { padding: 0 2px 7px 0; }
.list svg { width: 10px; height: 6px; }
.canvas {
  flex: 1;
  position: relative;
  min-height: 0;
  border-top: 2px solid #777;
  border-left: 1px solid #777;
  background: #212830;
  overflow: hidden;
}
.field { position: absolute; inset: 0; }
.ucs { position: absolute; left: 20px; bottom: 19px; }
.layouts {
  flex: none;
  display: flex;
  height: 26px;
  padding-left: 3px;
  border-top: 3px solid #fff;
  box-shadow: inset 0 1px #888;
  background: #a4abb4;
}
.go { width: 16px; padding: 1px 0 0; }
.go svg { width: 9px; height: 9px; }
.lay { position: relative; width: 42px; height: 18px; margin-top: 2px; line-height: 16px; white-space: nowrap; }
.lay svg { position: absolute; inset: 0; width: 100%; height: 100%; overflow: visible; fill: #c8c8c8; stroke: #777; }
.lay.on svg { fill: #fff; }
.lay span { position: relative; }
.on span { font-weight: 700; }

/* command line */
.command { flex: none; display: flex; height: 50px; background: #ddd; border-top: 1px solid #aaa; }
.strip { display: flex; flex-direction: column; gap: 8px; padding: 4px; width: 18px; background: linear-gradient(#3f6cad, #1f4f8c); color: #fff; }
.strip svg { width: 11px; height: 11px; }
.console { flex: 1; margin: 0 1px 1px; border: solid #555; border-width: 1px 0 0 1px; background: #fff; font-size: 14px; }
.console span { white-space: pre; font: 12px/14px "Liberation Mono", monospace; }
.history { display: flex; height: 28px; border-bottom: 1px solid #555; }
.log { flex: 1; display: flex; flex-direction: column; justify-content: flex-end; overflow: hidden; padding: 0 0 2px; }
.log p { flex: none; line-height: 17px; }
.vscroll { display: flex; flex-direction: column; justify-content: space-between; align-items: center; width: 16px; margin-right: 1px; padding: 5px 0; background: #f0f0f0; }
.vscroll svg { width: 8px; height: 5px; fill: #333; }
.prompt { display: flex; align-items: center; height: 18px; line-height: 18px; }
.prompt input { flex: 1; min-width: 0; height: 16px; outline: 0; }
.mark { align-self: flex-end; width: 16px; height: 3px; margin-right: 64px; }
.hscroll { display: flex; align-items: center; justify-content: space-between; width: 79px; height: 16px; margin-right: 18px; padding: 0 6px; background: #f0f0f0; }
.hscroll svg { width: 5px; height: 8px; fill: #333; }
.hscroll i { width: 15px; height: 15px; margin-right: 28px; border: 1px solid #888; border-radius: 1px; background: linear-gradient(#f8f8f8, #cfcfcf); }

/* overlay badge */
.brand { position: absolute; left: 0; top: 0; display: flex; pointer-events: none; }
.brand div { display: flex; flex-direction: column; padding: 10px 0 0 4px; }
.brand strong { color: rgb(28 134 214 / 75%); font: 700 27px/36px "Noto Serif CJK SC", "Noto Sans CJK SC", sans-serif; }
.brand em { color: rgb(52 160 60 / 80%); font: 700 20px/22px "Liberation Serif", serif; }
```
